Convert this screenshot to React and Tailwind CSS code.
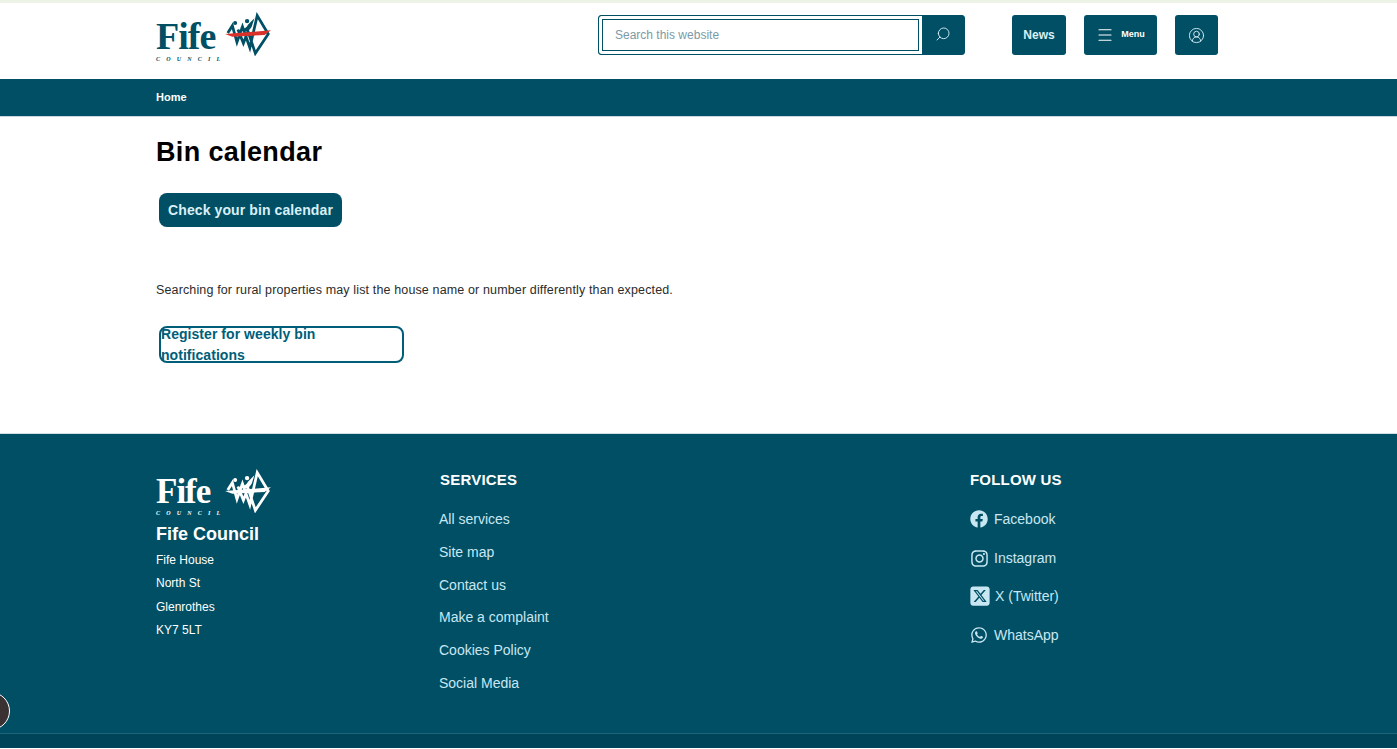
import React from "react";
import { Search, Menu, CircleUserRound } from "lucide-react";
import { FaFacebook, FaInstagram, FaWhatsapp } from "react-icons/fa";
import { FaSquareXTwitter } from "react-icons/fa6";

function LogoMark({ stroke, accent }) {
  return (
    <svg viewBox="0 0 50 46" className="w-[46px] h-[44px] shrink-0" fill="none">
      <path d="M3 22 L8 14 L13 32 L19 15 L27 38 L35 3 L47 23 L33 44 L25 20 L20 33 L14 18" stroke={stroke} strokeWidth="3" strokeLinejoin="miter" />
      <circle cx="11" cy="11" r="2.2" fill={stroke} />
      <circle cx="24" cy="9" r="2.4" fill={stroke} />
      <path d="M17 15 Q21 20 25 13 Q28 10 32 6 L29 15 Q24 23 18 19Z" fill={stroke} />
      <path d="M0 23 L50 19 L43 24 L8 26 Z" fill={accent} />
    </svg>
  );
}

function Logo({ color, stroke, accent, small }) {
  return (
    <div className={`flex items-start ${small ? "w-[88px] h-[42px]" : "w-[97px] h-[44px]"}`}>
      <div className="flex flex-col shrink-0">
        <span className={`font-['Liberation_Serif',serif] font-bold leading-none tracking-[-1px] ${small ? "text-[35px] mt-[5px]" : "text-[38px] mt-[5px]"} ${color}`}>Fife</span>
        <span className={`font-['Liberation_Serif',serif] italic font-bold text-[6px] leading-none tracking-[6.2px] mt-[1px] whitespace-nowrap ${color}`}>COUNCIL</span>
      </div>
      <div className="-ml-[1px]">
        <LogoMark stroke={stroke} accent={accent} />
      </div>
    </div>
  );
}

function FooterLink({ children }) {
  return <a className="text-[14px] leading-[20px] text-[#c9e7f2] block">{children}</a>;
}

function Social({ icon, label, labelClass, rowClass }) {
  return (
    <div className={`flex items-center text-[14px] leading-[20px] text-[#c9e7f2] ${rowClass}`}>
      {icon}
      <span className={labelClass}>{label}</span>
    </div>
  );
}

export default function App() {
  return (
    <div className="w-full min-h-[749px] relative bg-white font-['Liberation_Sans',Arial,sans-serif] overflow-hidden">
      <div className="h-[3px] bg-[#eef3e8]" />
      <header className="h-[76px] pl-[156px] flex items-start">
        <div className="mt-[9px] w-[442px]">
          <Logo color="text-[#004f65]" stroke="#004f65" accent="#d8322a" />
        </div>
        <div className="mt-[12px] flex items-stretch h-[40px] w-[367px] rounded-[3px] border border-[#004f65] bg-[#004f65]">
          <div className="flex-1 bg-white rounded-l-[3px] p-[3px]">
            <div className="h-full border border-[#004f65] flex items-center pl-[12px] text-[12px] text-[#7d9aa5]">Search this website</div>
          </div>
          <div className="w-[42px] flex items-center justify-center text-[#d7edf5]">
            <Search size={16} strokeWidth={1.4} className="-scale-x-100 -translate-y-[1px]" />
          </div>
        </div>
        <div className="mt-[12px] ml-[47px] h-[40px] w-[54px] rounded-[3px] bg-[#004f65] flex items-center justify-center text-[12px] font-bold text-[#d9f0f7]">News</div>
        <div className="mt-[12px] ml-[18px] h-[40px] w-[73px] rounded-[3px] bg-[#004f65] flex items-center justify-center gap-[7px] text-white">
          <Menu size={18} strokeWidth={1.5} />
          <span className="text-[9px] font-bold">Menu</span>
        </div>
        <div className="mt-[12px] ml-[18px] h-[40px] w-[43px] rounded-[3px] bg-[#004f65] flex items-center justify-center text-[#d9f0f7]">
          <CircleUserRound size={17} strokeWidth={1.3} />
        </div>
      </header>

      <nav className="h-[37px] bg-[#004f65] pl-[156px] flex items-center border-b border-[#c7d8de] box-content -mb-[1px]">
        <span className="text-[11px] font-bold text-white">Home</span>
      </nav>

      <main className="h-[318px] pl-[156px] border-b border-[#cfe0e5]">
        <h1 className="pt-[20px] text-[27px] leading-[32px] font-bold tracking-[0.35px] text-black">Bin calendar</h1>
        <a className="mt-[25px] ml-[3px] flex items-center justify-center w-[183px] h-[34px] rounded-[8px] bg-[#004f65] text-[14px] font-bold tracking-[0.1px] text-[#d9f0f7]">Check your bin calendar</a>
        <p className="mt-[54px] text-[12.5px] leading-[18px] tracking-[0.14px] text-[#2b2b2b]">Searching for rural properties may list the house name or number differently than expected.</p>
        <a className="mt-[27px] ml-[3px] flex items-center justify-center w-[245px] h-[37px] rounded-[8px] border-2 border-[#005e78] text-[14px] font-bold tracking-[0.05px] text-[#005e78]">Register for weekly bin notifications</a>
      </main>

      <footer className="h-[300px] bg-[#004f65] pl-[156px] pt-[35px] grid grid-cols-[283px_531px_1fr] border-b border-[#1f657a]">
        <div>
          <Logo color="text-white" stroke="#ffffff" accent="#ffffff" small />
          <div className="mt-[11px] text-[18px] leading-[24px] font-bold text-white">Fife Council</div>
          <div className="mt-[3px] text-[12px] leading-[23.4px] text-white">
            <div>Fife House</div>
            <div>North St</div>
            <div>Glenrothes</div>
            <div>KY7 5LT</div>
          </div>
        </div>
        <div>
          <div className="mt-[1px] ml-[1px] text-[15px] leading-[20px] font-bold tracking-[0.2px] text-white">SERVICES</div>
          <div className="mt-[19px] flex flex-col gap-[12.8px]">
            <FooterLink>All services</FooterLink>
            <FooterLink>Site map</FooterLink>
            <FooterLink>Contact us</FooterLink>
            <FooterLink>Make a complaint</FooterLink>
            <FooterLink>Cookies Policy</FooterLink>
            <FooterLink>Social Media</FooterLink>
          </div>
        </div>
        <div>
          <div className="mt-[1px] text-[15px] leading-[20px] font-bold tracking-[0.2px] text-white">FOLLOW US</div>
          <div className="mt-[19px] flex flex-col">
            <Social icon={<FaFacebook size={18} />} label="Facebook" labelClass="ml-[6px]" rowClass="h-[20px]" />
            <Social icon={<FaInstagram size={19} />} label="Instagram" labelClass="ml-[5px]" rowClass="h-[20px] mt-[19px]" />
            <Social icon={<FaSquareXTwitter size={22} className="-ml-[1px]" />} label="X (Twitter)" labelClass="ml-[4px]" rowClass="h-[20px] mt-[18px]" />
            <Social icon={<FaWhatsapp size={18} />} label="WhatsApp" labelClass="ml-[6px]" rowClass="h-[20px] mt-[19px]" />
          </div>
        </div>
      </footer>
      <div className="h-[14px] bg-[#00445a]" />

      <div className="absolute left-[-28px] top-[692px] w-[38px] h-[38px] rounded-full bg-[#3a3232] border border-white" />
    </div>
  );
}
